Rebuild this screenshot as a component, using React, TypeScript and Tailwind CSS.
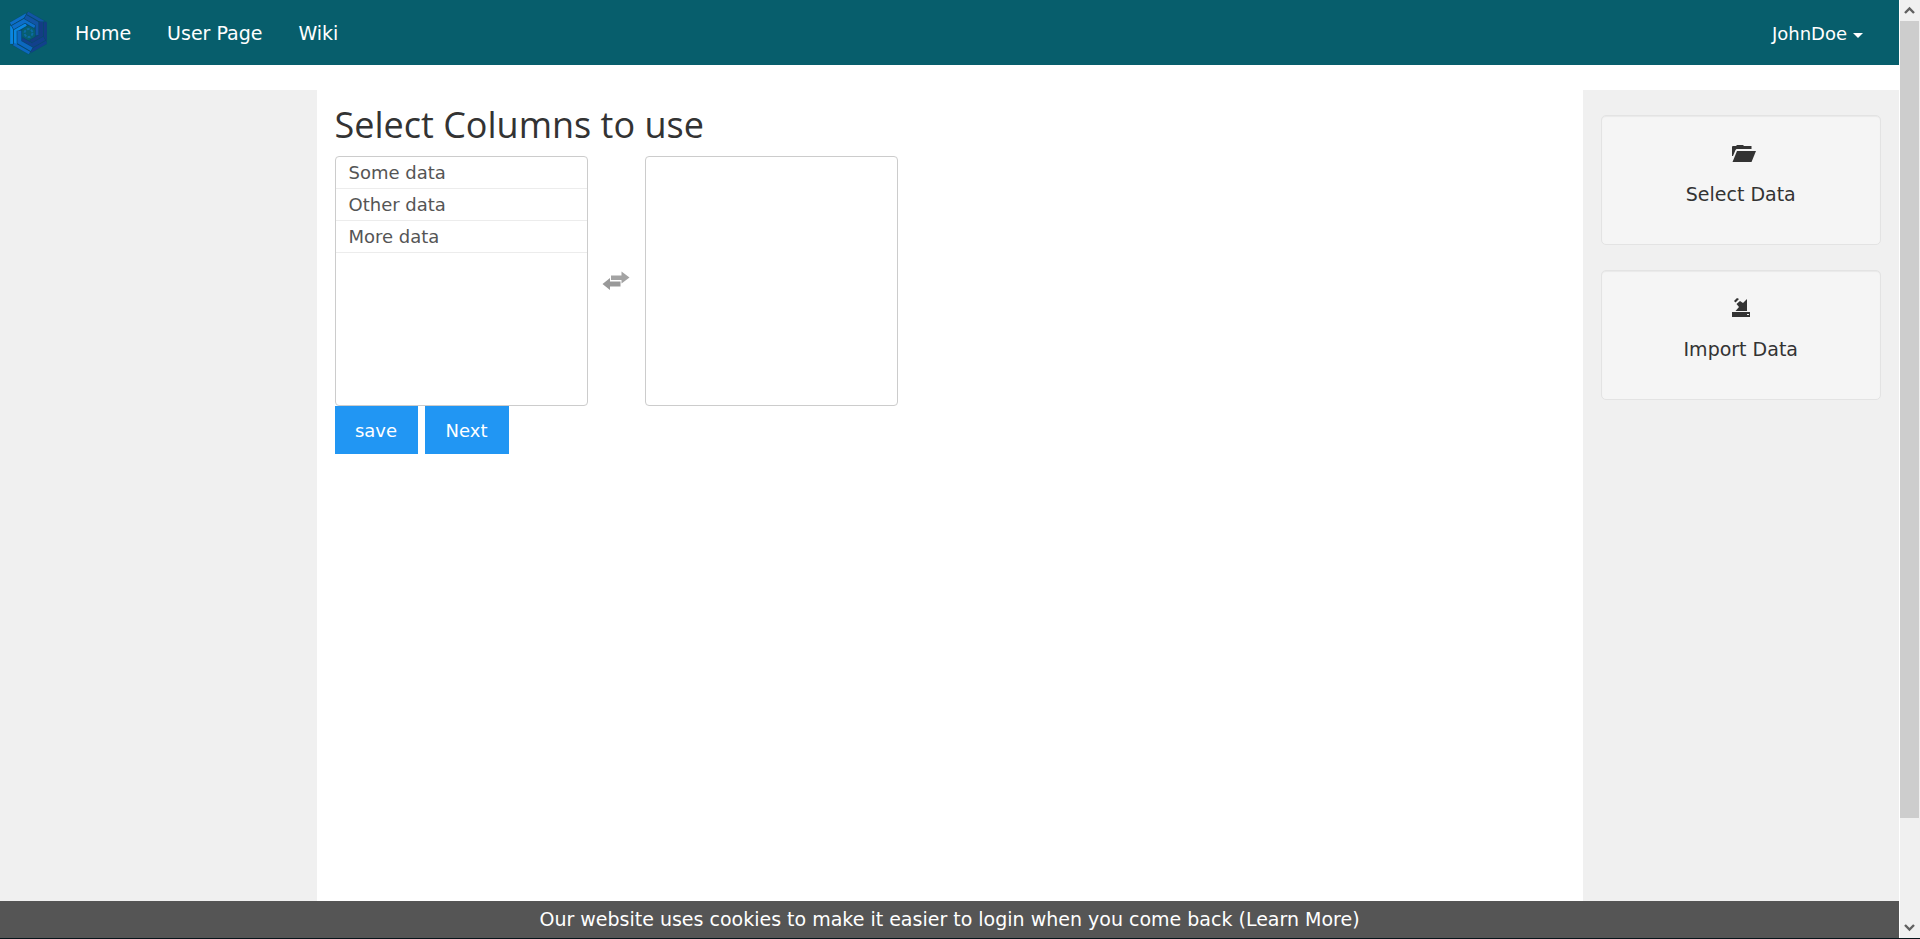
import React, { useState } from "react";

const HEX = "0,-65 56,-33 56,33 0,65 -56,33 -56,-33";
const BLADE_COLORS = ["#0a86e0", "#0d6ec8", "#1254a4", "#143d84", "#12408c", "#0c68c0"];

function Logo() {
  return (
    <svg viewBox="-56 -66 112 132" className="h-11 w-[37px]" aria-hidden="true">
      <polygon points={HEX} fill="#08506f" />
      <circle r="21" fill="#075e70" />
      {BLADE_COLORS.map((color, i) => (
        <g key={color} transform={`rotate(${i * 60})`} fill="none" stroke={color}>
          <path d="M-51 33V-22" strokeWidth="9" />
          <path d="M-38 35V-10L-8 -27.500" strokeWidth="16" stroke="#08486f" />
          <path d="M-38 33V-10L-8 -27.500" strokeWidth="12" />
        </g>
      ))}
      <circle r="12" fill="none" stroke="#0d6aa4" strokeWidth="6" strokeDasharray="8.500 4" />
    </svg>
  );
}

function FolderIcon() {
  return (
    <svg viewBox="0 0 24 17" className="h-[17px] w-6 shrink-0" fill="currentColor" aria-hidden="true">
      <path d="M0 11V1.500L1 1H4L5 0H11L12 1H19.500V4H4.500L3.500 5L1 11Z" />
      <path d="M5 6H24L19.500 17H.500Z" />
    </svg>
  );
}

function ImportIcon() {
  return (
    <svg viewBox="0 0 18 19" className="h-[19px] w-[18px] shrink-0" fill="currentColor" aria-hidden="true">
      <path d="M2 3L5 0L7 1L3.500 4.500Z" />
      <path d="M4.500 6L8 3L11 5L15 1V13H3.500L7 9Z" />
      <path fillRule="evenodd" d="M0 14H18V19H0ZM15 16V17H17V16Z" />
    </svg>
  );
}

function SwapIcon() {
  return (
    <svg viewBox="0 0 28 20" className="h-5 w-7" fill="#a3a3a3" aria-hidden="true">
      <path d="M9 4.500H19.500V.500L27.500 6.500L19.500 12.500V9H9Z" />
      <path fill="#999999" d="M18.500 10.500V15.500H8V19L.500 13L8 7V10.500Z" />
    </svg>
  );
}

function ColumnList({ label, items }: { label: string; items: string[] }) {
  return (
    <ul aria-label={label} className="h-[250px] w-[253px] rounded border border-[#cccccc] bg-white">
      {items.map((item) => (
        <li key={item} className="h-8 border-b border-[#ececec] px-[13px] text-[18px] leading-8 text-[#555555]">
          {item}
        </li>
      ))}
    </ul>
  );
}

function ActionCard({ icon, label }: { icon: React.ReactNode; label: string }) {
  return (
    <button
      type="button"
      className="flex h-[130px] w-full flex-col items-center rounded-[5px] border border-[#e3e3e3] bg-[#f5f5f5] pt-[26px] shadow-[inset_0_1px_1px_rgba(0,0,0,0.05)]"
    >
      <span className="flex h-5 w-[18px] items-end">{icon}</span>
      <span className="mt-[18px] text-[19px] leading-7">{label}</span>
    </button>
  );
}

function ScrollRail() {
  return (
    <div className="ml-px flex w-5 shrink-0 flex-col bg-[#f0f0f0] pr-px" aria-hidden="true">
      <svg viewBox="0 0 19 21" className="h-[21px] w-[19px] shrink-0" fill="none" stroke="#606060" strokeWidth="2.400">
        <path d="M5 13L9.500 8.500L14 13" />
      </svg>
      <div className="grow-[797] bg-[#cdcdcd]" />
      <div className="grow-[99]" />
      <svg viewBox="0 0 19 21" className="h-[21px] w-[19px] shrink-0" fill="none" stroke="#606060" strokeWidth="2.400">
        <path d="M5 8L9.500 12.500L14 8" />
      </svg>
    </div>
  );
}

export default function App() {
  const [available] = useState(["Some data", "Other data", "More data"]);

  return (
    <div className="flex min-h-screen border-b border-[#06151a] bg-white font-['DejaVu_Sans',sans-serif] text-[#333333]">
      <div className="flex min-w-0 grow flex-col">
        <nav className="flex h-[65px] shrink-0 items-center bg-[#075e6c] pr-9 pl-2.5 text-[19px] text-white">
          <a href="#top" aria-label="Start">
            <Logo />
          </a>
          <div className="ml-7 flex grow gap-9 pt-px">
            <a href="#home">Home</a>
            <a href="#user">User Page</a>
            <a href="#wiki">Wiki</a>
          </div>
          <button type="button" className="flex items-center gap-1.5 pt-px text-[18px]">
            JohnDoe
            <svg viewBox="0 0 10 5" className="mt-1 h-[5px] w-2.5" fill="currentColor" aria-hidden="true">
              <path d="M0 0H10L5 5Z" />
            </svg>
          </button>
        </nav>

        <div className="mt-[25px] grid grow grid-cols-[1fr_4fr_1fr]">
          <aside className="bg-[#f0f0f0]" />
          <main className="px-[18px] pt-[14px]">
            <h1 className="mb-[10px] font-['Open_Sans',sans-serif] text-[36px] leading-[42px]">Select Columns to use</h1>
            <div className="flex items-center">
              <ColumnList label="Available columns" items={available} />
              <button type="button" aria-label="Swap" className="flex w-[57px] justify-center">
                <SwapIcon />
              </button>
              <ColumnList label="Chosen columns" items={[]} />
            </div>
            <div className="flex gap-[7px] text-[18px] text-white">
              <button type="button" className="h-12 w-[83px] bg-[#2196f3]">
                save
              </button>
              <button type="button" className="h-12 w-[84px] bg-[#2196f3]">
                Next
              </button>
            </div>
          </main>
          <aside className="flex flex-col gap-[25px] bg-[#f0f0f0] px-[18px] pt-[25px]">
            <ActionCard icon={<FolderIcon />} label="Select Data" />
            <ActionCard icon={<ImportIcon />} label="Import Data" />
          </aside>
        </div>

        <footer className="h-[37px] shrink-0 bg-[#555555] text-center text-[19px] leading-9 text-white">
          Our website uses cookies to make it easier to login when you come back (<a href="#cookies">Learn More</a>)
        </footer>
      </div>
      <ScrollRail />
    </div>
  );
}
